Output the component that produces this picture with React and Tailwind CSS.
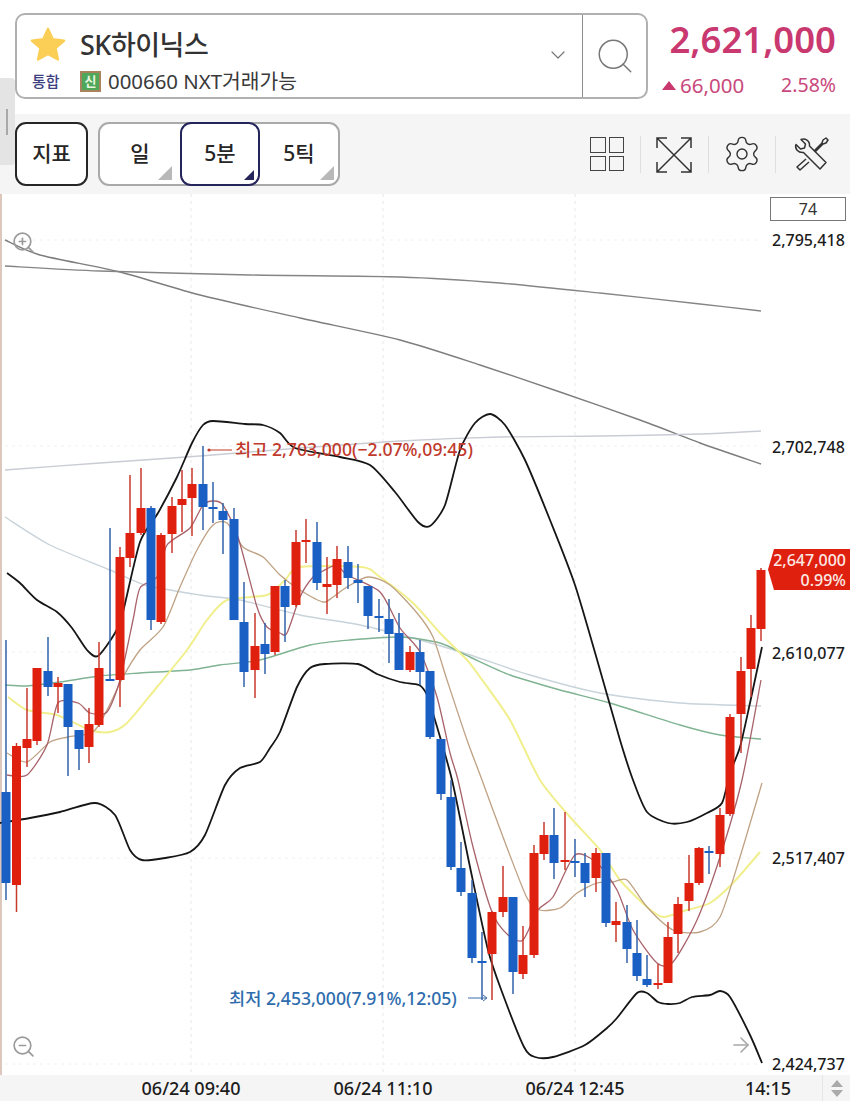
import React from 'react'
import { Settings, Search, ChevronDown, ArrowRight, ZoomIn, ZoomOut } from 'lucide-react'

const FONT = 'font-["Noto_Sans","Noto_Sans_CJK_KR",sans-serif]'

// [x, body-top, body-bottom, wick-top, wick-bottom, up?]  all in page pixels
const CANDLES = [
  [6, 792, 883, 640, 900, 0], [16.5, 746, 885, 743, 912, 1], [27, 739, 748, 688, 767, 1], [37, 668, 741, 668, 745, 1],
  [48, 671, 687, 637, 696, 0], [58, 683, 687, 677, 713, 1], [68, 684, 727, 684, 776, 0], [79, 730, 749, 730, 770, 0],
  [89, 724, 747, 708, 763, 1], [99, 668, 725, 642, 727, 1], [110, 679, 681, 528, 681, 0], [120, 557, 680, 547, 707, 1],
  [130, 533, 558, 475, 567, 1], [141, 508, 533, 468, 535, 1], [151, 508, 620, 506, 630, 0], [161, 535, 622, 533, 624, 1],
  [172, 506, 534, 497, 553, 1], [182, 499, 505, 470, 532, 1], [192, 484, 498, 468, 536, 1], [203, 484, 507, 446, 530, 0],
  [213, 507, 509, 482, 523, 0], [223, 511, 520, 503, 554, 0], [234, 519, 620, 508, 620, 0], [244, 622, 672, 582, 687, 0],
  [255, 646, 670, 613, 698, 1], [265, 644, 654, 623, 674, 0], [275, 586, 652, 586, 655, 1], [285, 586, 607, 580, 642, 0],
  [296, 542, 605, 530, 607, 1], [306, 540, 542, 519, 563, 1], [317, 542, 583, 522, 590, 0], [327, 584, 587, 557, 614, 1],
  [337, 559, 585, 546, 598, 1], [348, 562, 578, 546, 589, 0], [358, 580, 583, 564, 603, 0], [368, 586, 616, 586, 629, 0],
  [379, 616, 618, 599, 632, 0], [389, 619, 634, 599, 663, 0], [399, 633, 670, 613, 670, 0], [410, 652, 670, 646, 672, 1],
  [420, 652, 672, 640, 685, 0], [430, 671, 737, 671, 739, 0], [441, 739, 794, 739, 800, 0], [451, 797, 867, 780, 870, 0],
  [461, 868, 892, 842, 896, 0], [472, 893, 958, 880, 963, 0], [482, 961, 963, 932, 1000, 0], [492, 912, 954, 911, 1000, 1],
  [503, 897, 912, 866, 917, 1], [513, 897, 972, 897, 994, 0], [523, 955, 974, 926, 979, 1], [534, 853, 955, 845, 958, 1],
  [544, 835, 854, 822, 860, 1], [554, 835, 863, 808, 879, 0], [565, 860, 862, 812, 870, 1], [575, 861, 863, 839, 877, 0],
  [585, 863, 883, 853, 897, 0], [596, 853, 878, 848, 892, 1], [606, 853, 923, 853, 927, 0], [616, 921, 925, 902, 942, 1],
  [627, 922, 949, 905, 963, 0], [637, 953, 976, 920, 981, 0], [647, 979, 985, 955, 987, 0], [658, 983, 985, 964, 989, 1],
  [668, 937, 983, 922, 983, 1], [678, 904, 934, 897, 953, 1], [689, 883, 901, 855, 911, 1], [699, 848, 883, 847, 885, 1],
  [709, 851, 853, 846, 874, 0], [720, 815, 854, 808, 867, 1], [730, 717, 814, 714, 816, 1], [741, 671, 714, 657, 753, 1],
  [751, 628, 669, 615, 697, 1], [761, 570, 629, 568, 641, 1],
]

const LINES = [
  { c: '#7d7d7d', w: 1.4, p: [[5,240],[40,255],[120,272],[200,295],[300,318],[400,340],[480,365],[560,392],[640,420],[700,443],[761,464]] },
  { c: '#858585', w: 1.4, p: [[5,266],[100,271],[250,275],[400,277],[500,283],[600,293],[700,304],[761,311]] },
  { c: '#c9ccd4', w: 1.4, p: [[5,470],[100,463],[200,456],[300,448],[400,441],[500,437],[600,436],[700,434],[761,431]] },
  { c: '#c8d3da', w: 1.4, p: [[5,517],[50,545],[110,570],[145,585],[200,595],[240,600],[300,615],[360,625],[420,640],[470,655],[530,675],[600,693],[680,703],[761,706]] },
  { c: '#7fb392', w: 1.4, p: [[5,685],[27,686],[60,682],[100,676],[140,673],[190,670],[220,665],[260,660],[310,645],[350,640],[400,637],[440,643],[470,657],[510,675],[560,690],[610,703],[680,725],[720,735],[761,739]] },
  { c: '#f1ef8c', w: 2, p: [[8,697],[27,710],[57,715],[90,730],[110,732],[127,723],[157,687],[187,650],[207,620],[227,600],[267,595],[285,580],[300,567],[362,567],[380,577],[413,603],[440,633],[467,660],[480,677],[510,720],[540,780],[570,817],[600,850],[620,880],[647,907],[663,917],[687,910],[710,903],[733,883],[760,852]] },
  { c: '#bfa183', w: 1.3, p: [[7,753],[27,762],[50,742],[68,737],[93,732],[107,710],[123,677],[140,650],[163,627],[180,587],[197,550],[213,525],[227,523],[243,547],[263,557],[280,575],[300,590],[323,602],[333,597],[347,587],[368,577],[390,585],[417,613],[433,637],[447,680],[467,740],[482,780],[503,837],[527,898],[540,910],[560,908],[577,893],[597,883],[613,882],[627,880],[647,907],[673,930],[700,932],[720,917],[740,857],[762,783]] },
  { c: '#a8626a', w: 1.3, p: [[7,775],[27,775],[47,745],[58,703],[78,703],[90,713],[107,712],[120,680],[133,620],[140,588],[157,577],[167,545],[190,528],[203,505],[213,501],[223,505],[238,537],[257,607],[267,627],[280,633],[287,633],[300,597],[313,577],[323,571],[337,565],[347,575],[380,592],[400,628],[420,652],[437,697],[450,753],[458,780],[473,847],[492,912],[508,935],[523,940],[538,910],[553,897],[575,855],[597,863],[617,890],[633,930],[657,963],[673,962],[697,920],[720,857],[742,780],[761,680]] },
  { c: '#161616', w: 1.8, p: [[7,573],[20,583],[37,600],[57,612],[72,628],[87,650],[98,656],[115,633],[123,612],[140,542],[158,513],[177,477],[192,443],[203,425],[213,421],[245,424],[263,425],[280,433],[295,448],[340,457],[370,465],[395,492],[418,522],[430,526],[445,505],[460,450],[475,423],[490,414],[505,425],[525,460],[550,520],[575,585],[600,670],[620,740],[633,780],[647,812],[668,823],[687,822],[707,813],[722,803],[730,773],[740,747],[750,703],[762,647]] },
  { c: '#161616', w: 1.8, p: [[0,823],[30,818],[60,812],[95,803],[115,815],[130,850],[142,860],[165,858],[190,852],[205,835],[225,785],[240,768],[260,762],[270,748],[280,732],[297,687],[310,668],[325,664],[358,664],[377,674],[400,682],[419,685],[427,695],[435,720],[452,780],[470,867],[488,950],[502,992],[524,1047],[535,1057],[553,1057],[585,1045],[607,1028],[617,1018],[637,993],[647,993],[658,1002],[668,1004],[680,1003],[692,997],[710,995],[720,991],[730,997],[750,1035],[762,1063]] },
]

// catmull-rom through the points, loose tension so the averages don't overshoot
function smooth(p) {
  let d = `M${p[0][0]} ${p[0][1]}`
  for (let i = 0; i < p.length - 1; i++) {
    const a = p[i - 1] || p[i], b = p[i], c = p[i + 1], e = p[i + 2] || c
    const c1 = [b[0] + (c[0] - a[0]) / 8, b[1] + (c[1] - a[1]) / 8]
    const c2 = [c[0] - (e[0] - b[0]) / 8, c[1] - (e[1] - b[1]) / 8]
    d += `C${c1[0]} ${c1[1]} ${c2[0]} ${c2[1]} ${c[0]} ${c[1]}`
  }
  return d
}

function Chart() {
  return (
    <svg className="absolute inset-0" width="850" height="881" viewBox="0 194 850 881">
      {[191, 383, 575].map(x => <line key={x} x1={x} x2={x} y1="194" y2="1075" stroke="#e8e8e8" strokeDasharray="3 4" />)}
      {[240, 446, 652, 858, 1064].map(y => <line key={y} x1="5" x2="762" y1={y} y2={y} stroke="#f0f0f0" strokeDasharray="3 4" />)}
      {LINES.map((l, i) => <path key={i} d={smooth(l.p)} fill="none" stroke={l.c} strokeWidth={l.w} strokeLinejoin="round" />)}
      {CANDLES.map(([x, t, b, wt, wb, up]) => {
        const col = up ? '#e0200f' : '#1a5fc4'
        return (
          <g key={x}>
            <line x1={x} x2={x} y1={wt} y2={wb} stroke={up ? '#c8392c' : '#2f62a8'} strokeWidth="1.5" />
            <rect x={x - 4.5} y={t} width="9" height={b - t} fill={col} />
          </g>
        )
      })}
      <path d="M232 450H210" stroke="#c0392b" strokeWidth="1" />
      <circle cx="209" cy="450" r="1.6" fill="#c0392b" />
      <path d="M468 998H487M483 995l4 3-4 3" stroke="#3a6ea8" strokeWidth="1" fill="none" />
    </svg>
  )
}

function Tools() {
  return (
    <svg width="36" height="36" viewBox="0 0 36 36" fill="none" stroke="#333" strokeWidth="1.5" strokeLinejoin="round">
      <path d="M3 8.500 7.500 13l4-1 1-4L8 3.500c4-1.500 9 1 8.500 6.500L33 26.500 27 33 10.500 16.500C5 17 1.500 12.500 3 8.500Z" />
      <path d="M13 23 4 31l3 3 9-8M21 15l8-8 1-3 3-2 2 2-2 3-3 1-8 8" />
    </svg>
  )
}

function Expand() {
  return (
    <svg width="38" height="38" viewBox="0 0 38 38" fill="none" stroke="#333" strokeWidth="1.5">
      <path d="M2 36 36 2M2 2l34 34M2 12V2h10M26 2h10v10M36 26v10H26M12 36H2V26" />
    </svg>
  )
}

function Grid4() {
  return (
    <div className="grid h-[34px] w-[34px] grid-cols-2 gap-[3px]">
      {[0, 1, 2, 3].map(i => <span key={i} className="border-[1.5px] border-[#444]" />)}
    </div>
  )
}

const AXIS = 'absolute left-[772px] text-[16px] leading-5 font-medium text-[#1c1c1c]'

export default function App() {
  return (
    <div className={`${FONT} relative flex h-[1101px] w-[850px] flex-col overflow-hidden bg-white`}>
      <div className="absolute left-0 top-[78px] z-20 h-[87px] w-[15px] rounded-r-sm bg-[#e4e4e4]">
        <span className="absolute left-[6px] top-[31px] h-[26px] w-[2px] bg-[#a8a8a8]" />
      </div>

      {/* name box and price */}
      <header className="relative z-10 flex h-[114px] shrink-0 items-start pl-[15px] pr-[14px] pt-[13px]">
        <div className="flex h-[86px] w-[633px] rounded-[10px] border-2 border-[#b0b0b0] bg-white">
          <div className="relative min-w-0 flex-1 pl-[13px] pt-[6px]">
            <div className="flex h-[48px] items-center">
              <svg width="38" height="38" viewBox="0 0 24 24" className="-ml-[1px]">
                <path d="M12 1.800 15 8.400l7.200.8-5.400 4.800 1.500 7.200L12 17.600 5.700 21.200l1.500-7.200L1.800 9.200 9 8.400Z" fill="#fbcf55" stroke="#fbcf55" strokeLinejoin="round" strokeWidth="1.500" />
              </svg>
              <span className="ml-[13px] text-[27px] font-medium tracking-[-0.5px] text-[#333]">SK하이닉스</span>
            </div>
            <div className="flex h-[24px] items-center">
              <span className="w-[50px] pl-[2px] text-[15px] font-medium text-[#3b3f80]">통합</span>
              <span className="flex h-[21px] w-[21px] items-center justify-center border-2 border-[#a8835c] bg-[#4fa85a] text-[13px] font-bold leading-none text-[#e9f7e0]">신</span>
              <span className="ml-[7px] text-[20.4px] text-[#3a3a3a]">000660 NXT거래가능</span>
            </div>
            <ChevronDown className="absolute right-[12px] top-[28px]" size={24} strokeWidth={1.2} color="#777" />
          </div>
          <div className="flex w-[64px] items-center justify-center border-l border-[#8c8c8c]">
            <Search size={42} strokeWidth={0.85} color="#777" />
          </div>
        </div>
        <div className="flex flex-1 flex-col items-end">
          <div className="-mt-[1px] text-[36.5px] font-semibold leading-[54px] text-[#c9386f]">2,621,000</div>
          <div className="mt-[7px] flex w-full items-center justify-end pl-[14px] text-[#c9487c]">
            <span className="h-0 w-0 border-x-[7px] border-b-[9px] border-x-transparent border-b-[#c9386f]" />
            <span className="ml-[4px] text-[20.5px] leading-6">66,000</span>
            <span className="ml-auto text-[19.5px] leading-6">2.58%</span>
          </div>
        </div>
      </header>

      {/* toolbar */}
      <div className="relative z-10 flex h-[80px] shrink-0 items-center bg-[#f5f5f5] pl-[15px]">
        <button className="h-[64px] w-[73px] rounded-[11px] border-2 border-[#262626] bg-white text-[21px] font-medium text-[#262626]">지표</button>
        <div className="ml-[10px] flex h-[64px] w-[242px] rounded-[11px] border-2 border-[#a9a9a9] bg-white text-[21px] font-medium text-[#262626]">
          <div className="relative flex w-[80px] items-center justify-center">
            일
            <svg className="absolute bottom-[4px] right-[8px]" width="14" height="14" viewBox="0 0 14 14"><path d="M14 0V14H0Z" fill="#b8b8b8" /></svg>
          </div>
          <div className="relative -my-[2px] flex w-[80px] items-center justify-center rounded-[11px] border-2 border-[#25255c]">
            5분
            <svg className="absolute bottom-[4px] right-[4px]" width="10" height="10" viewBox="0 0 10 10"><path d="M10 0V10H0Z" fill="#25255c" /></svg>
          </div>
          <div className="relative flex flex-1 items-center justify-center">
            5틱
            <svg className="absolute bottom-[4px] right-[4px]" width="14" height="14" viewBox="0 0 14 14"><path d="M14 0V14H0Z" fill="#b8b8b8" /></svg>
          </div>
        </div>
        <div className="absolute left-[590px] top-[23px]"><Grid4 /></div>
        <span className="absolute left-[640px] top-[22px] h-[37px] w-px bg-[#dedede]" />
        <div className="absolute left-[655px] top-[22px]"><Expand /></div>
        <span className="absolute left-[708px] top-[22px] h-[37px] w-px bg-[#dedede]" />
        <div className="absolute left-[722px] top-[20px]"><Settings size={40} strokeWidth={0.85} color="#333" /></div>
        <span className="absolute left-[775px] top-[22px] h-[37px] w-px bg-[#dedede]" />
        <div className="absolute left-[793px] top-[22px]"><Tools /></div>
      </div>

      {/* chart */}
      <div className="relative flex-1 border-l-2 border-l-[#dcc7bd]">
        <div className="absolute -left-[2px] top-0 h-[881px] w-[850px]">
          <Chart />
          <span className="absolute left-[235px] top-[245px] text-[17.6px] font-medium leading-5 text-[#c0392b]">최고 2,703,000(−2.07%,09:45)</span>
          <span className="absolute left-[229px] top-[794px] text-[17.6px] font-medium leading-5 text-[#2e6cad]">최저 2,453,000(7.91%,12:05)</span>

          <div className="absolute left-[770px] top-[3px] flex h-[24px] w-[76px] items-center justify-center border border-[#777] bg-white text-[16px] leading-none text-[#333]">74</div>
          <span className={`${AXIS} top-[36px]`}>2,795,418</span>
          <span className={`${AXIS} top-[243px]`}>2,702,748</span>
          <span className={`${AXIS} top-[449px]`}>2,610,077</span>
          <span className={`${AXIS} top-[654px]`}>2,517,407</span>
          <span className={`${AXIS} top-[860px]`}>2,424,737</span>

          <div className="absolute left-[768px] top-[355px] flex h-[41px] w-[82px] flex-col items-end justify-center bg-[#e0200f] pr-[4px] text-[16px] font-medium leading-[20px] text-[#fbe9e4] [clip-path:polygon(6px_0,100%_0,100%_100%,6px_100%,0_50%)]">
            <span>2,647,000</span>
            <span>0.99%</span>
          </div>

          <ZoomIn className="absolute left-[11px] top-[36px]" size={25} strokeWidth={1.6} color="#9a9a9a" />
          <ZoomOut className="absolute left-[11px] top-[840px]" size={25} strokeWidth={1.6} color="#9a9a9a" />
          <ArrowRight className="absolute left-[729px] top-[839px]" size={24} strokeWidth={1.6} color="#a8a8a8" />
        </div>
      </div>

      {/* time axis */}
      <div className="relative z-10 flex h-[26px] shrink-0 items-center bg-[#f5f5f5] pl-[95px] text-[18px] font-medium text-[#1c1c1c]">
        <span className="w-[192px] text-center">06/24 09:40</span>
        <span className="w-[192px] text-center">06/24 11:10</span>
        <span className="w-[192px] text-center">06/24 12:45</span>
        <span className="ml-[74px]">14:15</span>
        <div className="absolute right-0 top-0 flex h-full w-[28px] flex-col items-center justify-center gap-[3px] border-l border-[#e6e6e6]">
          <span className="h-0 w-0 border-x-[6px] border-b-[7px] border-x-transparent border-b-[#aaa]" />
          <span className="h-0 w-0 border-x-[6px] border-t-[7px] border-x-transparent border-t-[#aaa]" />
        </div>
      </div>
    </div>
  )
}
